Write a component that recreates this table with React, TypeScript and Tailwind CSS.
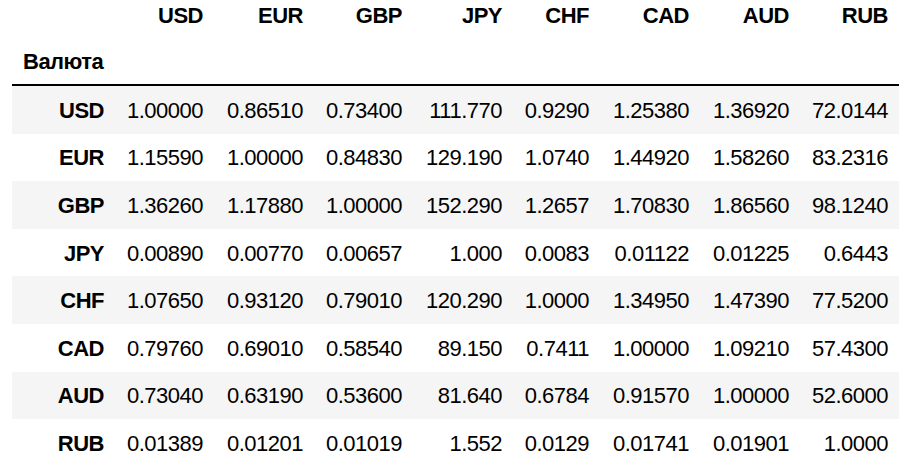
import React from "react";

const cols = ["USD", "EUR", "GBP", "JPY", "CHF", "CAD", "AUD", "RUB"];

const rows: [string, string[]][] = [
  ["USD", ["1.00000", "0.86510", "0.73400", "111.770", "0.9290", "1.25380", "1.36920", "72.0144"]],
  ["EUR", ["1.15590", "1.00000", "0.84830", "129.190", "1.0740", "1.44920", "1.58260", "83.2316"]],
  ["GBP", ["1.36260", "1.17880", "1.00000", "152.290", "1.2657", "1.70830", "1.86560", "98.1240"]],
  ["JPY", ["0.00890", "0.00770", "0.00657", "1.000", "0.0083", "0.01122", "0.01225", "0.6443"]],
  ["CHF", ["1.07650", "0.93120", "0.79010", "120.290", "1.0000", "1.34950", "1.47390", "77.5200"]],
  ["CAD", ["0.79760", "0.69010", "0.58540", "89.150", "0.7411", "1.00000", "1.09210", "57.4300"]],
  ["AUD", ["0.73040", "0.63190", "0.53600", "81.640", "0.6784", "0.91570", "1.00000", "52.6000"]],
  ["RUB", ["0.01389", "0.01201", "0.01019", "1.552", "0.0129", "0.01741", "0.01901", "1.0000"]],
];

const gridCols =
  "grid grid-cols-[103px_99px_100px_99px_100px_87px_100px_100px_99px] items-center";

export default function App() {
  return (
    <div
      className="w-[924px] h-[470px] overflow-hidden bg-white text-black"
      style={{ fontFamily: '"Liberation Sans", Arial, sans-serif' }}
    >
      <div className="ml-[12px] w-[887px] -mt-2 text-[22px] leading-none tracking-[-0.5px]">
        <div className={gridCols + " h-[47px]"}>
          <div />
          {cols.map((c) => (
            <div key={c} className="text-right pr-[11px] font-bold">
              {c}
            </div>
          ))}
        </div>
        <div className={gridCols + " h-[47px] border-b-2 border-black"}>
          <div className="text-left pl-[11px] font-bold">Валюта</div>
          {cols.map((c) => (
            <div key={c} />
          ))}
        </div>
        {rows.map(([name, vals], i) => (
          <div
            key={name}
            className={gridCols + " h-[47.6px] pt-[2px]" + (i % 2 === 0 ? " bg-[#f5f5f5]" : "")}
          >
            <div className="text-right pr-[11px] font-bold">{name}</div>
            {vals.map((v, j) => (
              <div key={j} className="text-right pr-[11px]">
                {v}
              </div>
            ))}
          </div>
        ))}
      </div>
    </div>
  );
}
